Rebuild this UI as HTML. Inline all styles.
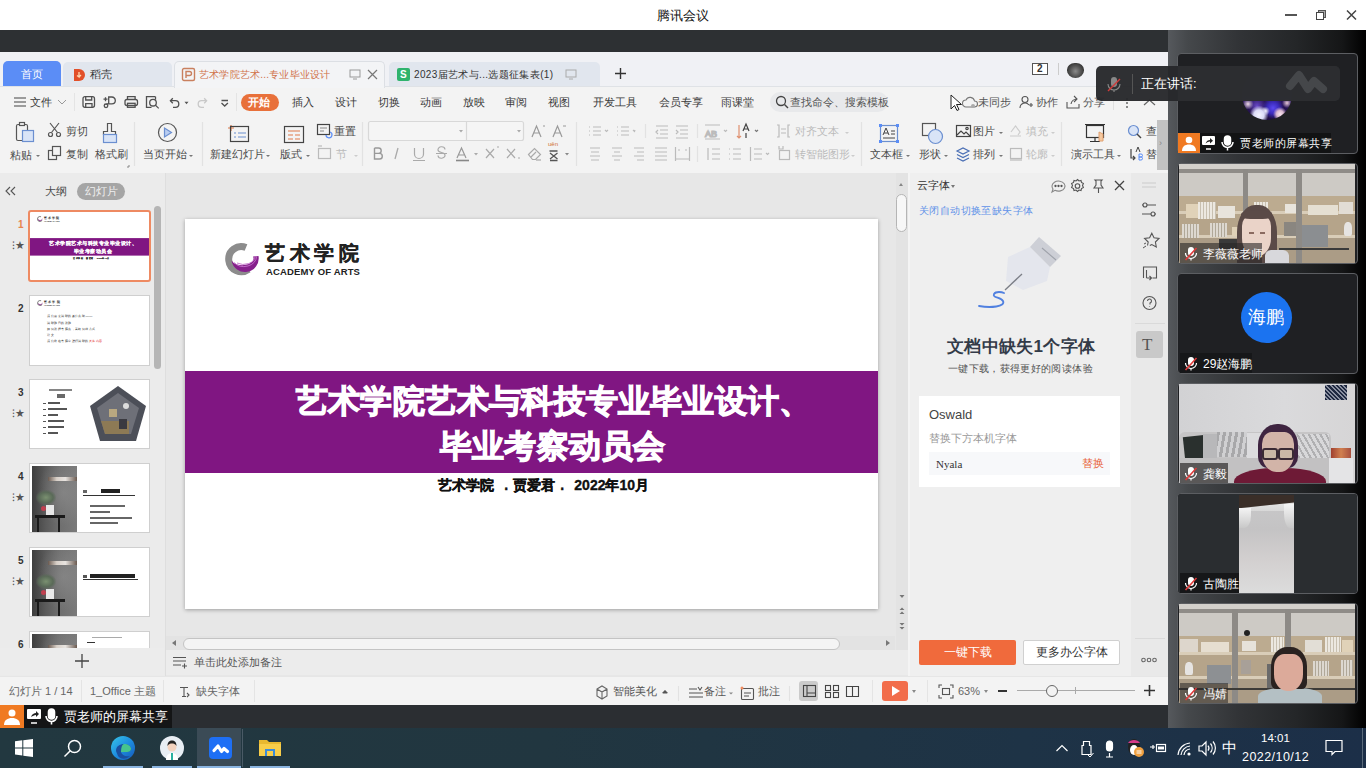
<!DOCTYPE html>
<html><head><meta charset="utf-8">
<style>
*{box-sizing:border-box;margin:0;padding:0}
html,body{width:1366px;height:768px;overflow:hidden;background:#fff;font-family:"Liberation Sans",sans-serif;color:#333}
.a{position:absolute}
.t{position:absolute;white-space:nowrap;line-height:1}
</style></head><body>
<!-- title bar -->
<div class="a" style="left:0;top:0;width:1366px;height:30px;background:#fff"></div>
<div class="t" style="left:657px;top:8.5px;font-size:13.2px;color:#111">腾讯会议</div>
<!-- dark band -->
<div class="a" style="left:0;top:30px;width:1168px;height:22px;background:#2d3033"></div>
<!-- WPS tab bar -->
<div class="a" style="left:0;top:52px;width:1168px;height:36px;background:#f0f1f5"></div>
<!-- menu + ribbon -->
<div class="a" style="left:0;top:86px;width:1168px;height:87px;background:#f3f3f3"></div>

<!-- window controls -->
<div class="a" style="left:1285px;top:14px;width:12px;height:2px;background:#555"></div>
<div class="a" style="left:1318px;top:10px;width:8px;height:8px;border:1.3px solid #555;background:#aaa"></div>
<div class="a" style="left:1316px;top:12px;width:8px;height:8px;border:1.3px solid #444;background:#fff"></div>
<svg class="a" style="left:1346px;top:9px" width="11" height="12"><path d="M1 1.5L10 10.5M10 1.5L1 10.5" stroke="#444" stroke-width="1.5"/></svg>
<!-- tabs -->
<div class="a" style="left:3px;top:61px;width:58px;height:25px;background:#5b8df6;border-radius:5px 5px 0 0"></div>
<div class="t" style="left:21px;top:69px;font-size:10.5px;color:#fff">首页</div>
<div class="a" style="left:63px;top:62px;width:109px;height:24px;background:#e1e6ee;border-radius:5px 5px 0 0"></div>
<svg class="a" style="left:73px;top:68px" width="13" height="14"><path d="M1 1h5a6 6 0 0 1 0 12H1z" fill="#e2502a"/><path d="M6 4v5l-2-1.5M6 9l2-2" stroke="#ffd8b0" stroke-width="1.3" fill="none"/></svg>
<div class="t" style="left:90px;top:69px;font-size:10.5px;color:#333">稻壳</div>
<div class="a" style="left:174px;top:61px;width:211px;height:27px;background:#f3f4f6;border:1px solid #dcdfe4;border-bottom:none;border-radius:5px 5px 0 0"></div>
<svg class="a" style="left:181px;top:67px" width="15" height="15" fill="none" stroke="#c9805f" stroke-width="1.4"><rect x="1.5" y="1.5" width="12" height="12" rx="1.5"/><path d="M5 11V4.5h3.5a2 2 0 0 1 0 4H5"/></svg>
<div class="t" style="left:199px;top:69.5px;font-size:10px;color:#d0724a;letter-spacing:0.2px">艺术学院艺术...专业毕业设计</div>
<svg class="a" style="left:349px;top:69px" width="12" height="11"><rect x="1" y="1" width="10" height="7" fill="none" stroke="#999"/><path d="M4 10h4" stroke="#999"/></svg>
<svg class="a" style="left:367px;top:69px" width="11" height="11"><path d="M1 1L10 10M10 1L1 10" stroke="#777" stroke-width="1.2"/></svg>
<div class="a" style="left:389px;top:62px;width:211px;height:24px;background:#e1e6ee;border-radius:5px 5px 0 0"></div>
<div class="a" style="left:397px;top:68px;width:13px;height:13px;background:#2fb36d;border-radius:2px"></div>
<div class="t" style="left:400px;top:69.5px;font-size:10px;color:#fff;font-weight:bold">S</div>
<div class="t" style="left:414px;top:69.5px;font-size:10px;color:#333;letter-spacing:0.35px">2023届艺术与...选题征集表(1)</div>
<svg class="a" style="left:565px;top:69px" width="12" height="11"><rect x="1" y="1" width="10" height="7" fill="none" stroke="#aaa"/><path d="M4 10h4" stroke="#aaa"/></svg>
<svg class="a" style="left:614px;top:67px" width="13" height="13"><path d="M6.5 1v11M1 6.5h11" stroke="#333" stroke-width="1.4"/></svg>
<div class="a" style="left:0;top:86px;width:1168px;height:1px;background:#dfe2e6"></div>
<div class="a" style="left:175px;top:86px;width:209px;height:2px;background:#f3f4f6"></div>
<!-- tab bar right -->
<div class="a" style="left:1032px;top:63px;width:16px;height:12px;border:1px solid #555;background:#fff"></div>
<div class="t" style="left:1037px;top:64px;font-size:10px;color:#333;font-weight:bold">2</div>
<div class="a" style="left:1058px;top:63px;width:1px;height:12px;background:#ccc"></div>
<div class="a" style="left:1067px;top:63px;width:17px;height:15px;border-radius:45% 45% 50% 50%;background:radial-gradient(circle at 50% 55%,#8a8a8a 0,#555 45%,#2e2e2e 80%)"></div>
<!-- menu row -->
<svg class="a" style="left:13px;top:96px" width="14" height="12"><path d="M1 2h12M1 6h12M1 10h12" stroke="#444" stroke-width="1.2"/></svg>
<div class="t" style="left:30px;top:97px;font-size:10.5px;color:#3a3a3a">文件</div>
<svg class="a" style="left:57px;top:99px" width="10" height="7"><path d="M1 1l4 4 4-4" stroke="#999" fill="none"/></svg>
<div class="a" style="left:74px;top:93px;width:1px;height:18px;background:#e4e4e4"></div>
<svg class="a" style="left:80px;top:94px" width="160" height="18" fill="none" stroke="#505050" stroke-width="1.3">
<rect x="3" y="2.7" width="11.5" height="10.6" rx="2"/><path d="M5.7 3v3h6V3M5.7 13.3V9.7h6.3v3.6"/>
<path d="M23.5 5.2h4M25.5 3.2v4"/><path d="M28.7 10V3h3.2a3.4 3.4 0 0 1 0 6.8H26.5"/><circle cx="26" cy="11.8" r="1.8"/>
<path d="M47.5 5.5V2.7h7.6v2.8"/><rect x="45" y="5.5" width="12.5" height="6" rx="2"/><rect x="47.5" y="9.3" width="7.6" height="4"/>
<path d="M75.5 2.7H66.5v10.6h5"/><path d="M75.5 2.7v3"/><circle cx="73" cy="8.7" r="3.3"/><path d="M75.4 11.1l3.3 3.3"/>
<path d="M90.5 6.7h5a3.3 3.3 0 0 1 0 6.6h-2.5"/><path d="M92.8 4.2l-2.4 2.5 2.4 2.5"/>
<path d="M104.5 7.8h4l-2 2.4z" fill="#555" stroke="none"/>
<path d="M126.5 6.7h-5a3.3 3.3 0 0 0 0 6.6h2.5M124.2 4.2l2.4 2.5-2.4 2.5" stroke="#c8c8c8"/>
<path d="M141.5 6.5h6.5M141.5 9l3.2 3 3.2-3" stroke="#505050"/>
</svg>
<div class="a" style="left:236px;top:93px;width:1px;height:18px;background:#e4e4e4"></div>
<div class="a" style="left:241px;top:94px;width:38px;height:17px;background:#e8703a;border-radius:9px"></div>
<div class="t" style="left:248px;top:97px;font-size:11px;color:#fff;font-weight:bold">开始</div>
<div class="t" style="left:292px;top:97px;font-size:10.5px;color:#3a3a3a">插入</div>
<div class="t" style="left:335px;top:97px;font-size:10.5px;color:#3a3a3a">设计</div>
<div class="t" style="left:378px;top:97px;font-size:10.5px;color:#3a3a3a">切换</div>
<div class="t" style="left:420px;top:97px;font-size:10.5px;color:#3a3a3a">动画</div>
<div class="t" style="left:463px;top:97px;font-size:10.5px;color:#3a3a3a">放映</div>
<div class="t" style="left:505px;top:97px;font-size:10.5px;color:#3a3a3a">审阅</div>
<div class="t" style="left:548px;top:97px;font-size:10.5px;color:#3a3a3a">视图</div>
<div class="t" style="left:593px;top:97px;font-size:10.5px;color:#3a3a3a">开发工具</div>
<div class="t" style="left:659px;top:97px;font-size:10.5px;color:#3a3a3a">会员专享</div>
<div class="t" style="left:721px;top:97px;font-size:10.5px;color:#3a3a3a">雨课堂</div>
<div class="a" style="left:770px;top:92px;width:118px;height:20px;background:#e8e9eb;border-radius:10px"></div>
<svg class="a" style="left:775px;top:95px" width="14" height="14"><circle cx="6" cy="6" r="4.5" fill="none" stroke="#444" stroke-width="1.3"/><path d="M9.5 9.5l3.5 3.5" stroke="#444" stroke-width="1.4"/></svg>
<div class="t" style="left:790px;top:97px;font-size:10.5px;color:#555">查找命令、搜索模板</div>
<svg class="a" style="left:950px;top:94px" width="12" height="18"><path d="M1 1v14l3.5-3.5 2.5 5 2-1-2.5-5h5z" fill="#fff" stroke="#222" stroke-width="1"/></svg>
<svg class="a" style="left:962px;top:95px" width="16" height="14" fill="none" stroke="#777" stroke-width="1.1"><path d="M4 12a3.5 3.5 0 0 1 0-7 4.5 4.5 0 0 1 8.5 1 3 3 0 0 1 0 6z"/><circle cx="11" cy="11" r="2" fill="#aaa" stroke="none"/></svg>
<div class="t" style="left:978px;top:97px;font-size:11px;color:#555">未同步</div>
<svg class="a" style="left:1019px;top:95px" width="14" height="14" fill="none" stroke="#555" stroke-width="1.1"><circle cx="6" cy="4.5" r="3"/><path d="M1 13a5 5 0 0 1 9-3M10 10h4M12 8v4"/></svg>
<div class="t" style="left:1036px;top:97px;font-size:11px;color:#555">协作</div>
<svg class="a" style="left:1066px;top:95px" width="14" height="14" fill="none" stroke="#555" stroke-width="1.1"><path d="M1 7v6h12V9M5 9a6 6 0 0 1 6-5M8 1l3 3-3 3"/></svg>
<div class="t" style="left:1083px;top:97px;font-size:11px;color:#555">分享</div>


<div class="a" style="left:1113px;top:94px;width:1px;height:16px;background:#e0e0e0"></div>
<svg class="a" style="left:1124px;top:96px" width="34" height="14" fill="#666"><circle cx="3" cy="3" r="1"/><circle cx="3" cy="7" r="1"/><circle cx="3" cy="11" r="1"/><path d="M20 9l5.5-5 5.5 5" fill="none" stroke="#666" stroke-width="1.2"/></svg>
<!-- ribbon -->
<svg class="a" style="left:0;top:116px" width="1168" height="56" fill="none" stroke-width="1.2">
<!-- paste -->
<rect x="16.5" y="8.5" width="11" height="16" rx="1.5" stroke="#555"/><rect x="19.5" y="6.5" width="5" height="3" stroke="#555" fill="#f3f3f3"/><rect x="22.5" y="14.5" width="11" height="11" fill="#d9e4f7" stroke="#6b8fd0"/>
<!-- scissors -->
<circle cx="50.5" cy="18.5" r="2" stroke="#555"/><circle cx="58.5" cy="18.5" r="2" stroke="#555"/><path d="M51.5 16.5L59 7M57.5 16.5L50 7" stroke="#555"/>
<!-- copy -->
<rect x="48.5" y="34.5" width="8" height="9" stroke="#555"/><rect x="52.5" y="30.5" width="8" height="9" stroke="#555" fill="#f3f3f3"/>
<!-- format brush -->
<path d="M107.5 7.5h4v8h4v3h-12v-3h4z" stroke="#555"/><rect x="103.5" y="18.5" width="13" height="8" fill="#d9e4f7" stroke="#6b8fd0"/>
<path d="M127 51h2v-2" stroke="#888" stroke-width="1"/>
<path d="M134.5 6v44" stroke="#e2e2e2"/>
<!-- play circle -->
<circle cx="167.5" cy="16.5" r="9" stroke="#555"/><path d="M164.5 12v9l7-4.5z" fill="#b9cdf0" stroke="#6b8fd0"/>
<path d="M202.5 6v44" stroke="#e2e2e2"/>
<!-- new slide -->
<path d="M231 9v6M228 12h6" stroke="#e07a4a"/><rect x="230.5" y="10.5" width="18" height="15" stroke="#444"/><path d="M234 17h2M238 17h8M234 21h2M238 21h8" stroke="#6b8fd0"/>
<!-- layout -->
<rect x="284.5" y="10.5" width="19" height="16" stroke="#444"/><path d="M288 15h12M288 19h5M295 19h5M288 23h5M295 23h5" stroke="#e07a4a"/>
<!-- reset -->
<rect x="317.5" y="8.5" width="12" height="10" stroke="#444"/><path d="M320 12h7M320 15h4" stroke="#888"/><path d="M326 19a3 3 0 1 0 4-3" stroke="#5b8df6"/>
<!-- section -->
<rect x="318.5" y="32.5" width="12" height="10" stroke="#bbb"/><path d="M318 30h4" stroke="#bbb"/>
<path d="M362.5 6v44" stroke="#e2e2e2"/>
<!-- font boxes -->
<rect x="368.5" y="5.5" width="155" height="19" rx="2" stroke="#d8d8d8" fill="#f5f5f5"/><path d="M466.5 6v18" stroke="#d8d8d8"/>
<path d="M459 14h4l-2 2.5zM517 14h4l-2 2.5z" fill="#aaa" stroke="none"/>
<path d="M532 21l4.5-11 4.5 11M534 17h5M543 10h2" stroke="#999"/><path d="M553 21l4.5-11 4.5 11M555 17h5M563 10h3" stroke="#999"/>
<!-- B I U S -->
<path d="M374.5 32v11h5a2.8 2.8 0 0 0 0-5.6h-5M374.5 37.4h4a2.7 2.7 0 0 0 0-5.4h-4" stroke="#999" stroke-width="1.4"/>
<path d="M398 32l-3 11" stroke="#aaa" stroke-width="1.3"/>
<path d="M414.5 32v6a4.5 4.5 0 0 0 9 0v-6M413 44.5h12" stroke="#aaa" stroke-width="1.2"/>
<path d="M445 33.5a3.5 3 0 0 0-7 .5c0 3 7 2 7 5a3.5 3 0 0 1-7 .5M436 37.5h11" stroke="#aaa" stroke-width="1.2"/>
<path d="M457 42l4.5-10 4.5 10M459 39h5" stroke="#999"/><path d="M456 44.5h13" stroke="#888" stroke-width="1.6"/><path d="M474 37h4l-2 2.5z" fill="#aaa" stroke="none"/>
<path d="M486 33l8 9M494 33l-8 9M497 31h2" stroke="#aaa"/><path d="M507 33l8 9M515 33l-8 9M518 42h2" stroke="#aaa"/>
<path d="M528.5 38.5l6-6 6 6-5 5h-3zM531 41l5-5" stroke="#aaa"/><path d="M536 44h5" stroke="#aaa"/>
<text x="548" y="30" font-size="6" fill="#d07030" font-family="Liberation Sans">uěn</text><path d="M549.5 35h8M550 37l7.5 6M557.5 37l-7.5 6M550 44.5h7.5" stroke="#555" stroke-width="1.3"/><path d="M565 37h4l-2 2.5z" fill="#888" stroke="none"/>
<path d="M576.5 6v44" stroke="#e2e2e2"/>
<!-- paragraph -->
<g stroke="#bbb"><path d="M589 11h1M593 11h8M589 15h1M593 15h8M589 19h1M593 19h8M605 14l1.5 1.5L608 14"/>
<path d="M617 11h1M621 11h8M617 15h1M621 15h8M617 19h1M621 19h8M633 14l1.5 1.5L635 14"/>
<path d="M645.5 8v14" stroke="#e2e2e2"/>
<path d="M656 10h12M660 14h8M660 18h8M656 22h12M658 14l-2 2 2 2"/><path d="M676 10h12M680 14h8M680 18h8M676 22h12M676 14l2 2-2 2"/>
<path d="M697.5 8v14" stroke="#e2e2e2"/>
<path d="M705 9h15M705 23h15"/><text x="705" y="21" font-size="9" fill="#aaa" font-family="Liberation Sans">AB</text><path d="M724 14l1.5 1.5L727 14"/>
</g>
<path d="M739 9v13M737 20l2 2 2-2" stroke="#e09070"/><path d="M743 15l3-7 3 7M744 13h4M746 17v5" stroke="#444"/><path d="M755 14l1.5 1.5L758 14" stroke="#777"/>
<g stroke="#bbb">
<path d="M590 32h10M591 36h8M590 40h10M591 44h8M612 32h10M614 36h6M612 40h10M614 44h6M634 32h10M637 36h7M634 40h10M637 44h7M655 32h12M655 36h12M655 40h12M655 44h12"/>
<path d="M675.5 31v14M689.5 31v14M676 43h13M678 34h2M685 34h2"/>
<path d="M697.5 30v16" stroke="#e2e2e2"/>
<path d="M708 32v12M712 33h8M712 38h8M712 43h8M729 33h1M733 33h8M729 38h1M733 38h8M729 43h1M733 43h8M750.5 31v14M754 33h8M754 38h8M754 43h8M766 37l1.5 1.5L769 37"/>
<path d="M777 9h2v12h-2M790 9h-2v12h2M781 13h5M781 17h5"/>
<rect x="779.5" y="34.5" width="10" height="9"/><path d="M779 30v3h4v-3"/>
</g>
<path d="M861.5 6v44" stroke="#e2e2e2"/>
<!-- textbox -->
<rect x="880.5" y="9.5" width="17" height="16" stroke="#6b8fd0"/><path d="M883 19l3-7 3 7M884 17h4M891 15h4M891 18h4M883 22h12" stroke="#444" stroke-width="1"/>
<rect x="879" y="8" width="3" height="3" fill="#5b8df6"/><rect x="896" y="8" width="3" height="3" fill="#5b8df6"/><rect x="879" y="24" width="3" height="3" fill="#5b8df6"/><rect x="896" y="24" width="3" height="3" fill="#5b8df6"/>
<!-- shapes -->
<rect x="922.5" y="7.5" width="13" height="12" stroke="#555"/><circle cx="935.5" cy="20.5" r="7" fill="#d9e4f7" stroke="#6b8fd0"/>
<!-- picture -->
<rect x="956.5" y="9.5" width="14" height="11" stroke="#444"/><path d="M957 19l4-4 3 3 2-2 4 4" stroke="#444"/><circle cx="967" cy="12.5" r="1.2" stroke="#444"/>
<path d="M957 35l6-3 6 3-6 3zM957 38.5l6 3 6-3M957 42l6 3 6-3" stroke="#4a6fb5"/>
<path d="M1010 20h11M1011 16l4.5-6 4.5 6-2 3" stroke="#ccc"/><rect x="1010.5" y="32.5" width="11" height="10" stroke="#bbb"/><path d="M1010 44h12" stroke="#bbb"/>
<path d="M1061.5 6v44" stroke="#e2e2e2"/>
<!-- presenter tools -->
<rect x="1086.5" y="9.5" width="17" height="12" stroke="#333"/><path d="M1085 8.5h20M1095 22v3M1090 25.5h10" stroke="#333"/><path d="M1099 16v9h4v-7z" fill="#f5c9a0" stroke="#e0a070" stroke-width="1"/>
<!-- find replace -->
<circle cx="1133.5" cy="14.5" r="5" fill="#d9e4f7" stroke="#6b8fd0"/><path d="M1137 18l4 4" stroke="#444" stroke-width="1.4"/>
<path d="M1131 33v9h4M1133 40l2 2-2 2" stroke="#444"/><path d="M1136 36l2-5 2 5" stroke="#444" stroke-width="1"/><path d="M1139 38v6h2a1.5 1.5 0 0 0 0-3h-2 2a1.5 1.5 0 0 0 0-3h-2" stroke="#5b8df6" stroke-width="1"/>
</svg>
<div class="a" style="left:1157px;top:120px;width:11px;height:50px;background:#c2c2c2"></div>
<div class="t" style="left:1159px;top:139px;font-size:9px;color:#888">›</div>
<div class="t" style="left:10px;top:150px;font-size:10.5px;color:#4a4a4a">粘贴</div>
<div class="t" style="left:66px;top:126px;font-size:10.5px;color:#4a4a4a">剪切</div>
<div class="t" style="left:66px;top:149px;font-size:10.5px;color:#4a4a4a">复制</div>
<div class="t" style="left:95px;top:149px;font-size:10.5px;color:#4a4a4a">格式刷</div>
<div class="t" style="left:143px;top:149px;font-size:10.5px;color:#4a4a4a">当页开始</div>
<div class="t" style="left:210px;top:149px;font-size:10.5px;color:#4a4a4a">新建幻灯片</div>
<div class="t" style="left:280px;top:149px;font-size:10.5px;color:#4a4a4a">版式</div>
<div class="t" style="left:334px;top:126px;font-size:10.5px;color:#4a4a4a">重置</div>
<div class="t" style="left:336px;top:149px;font-size:10.5px;color:#bbb">节</div>
<div class="t" style="left:795px;top:126px;font-size:10.5px;color:#bbb">对齐文本</div>
<div class="t" style="left:795px;top:149px;font-size:10.5px;color:#bbb">转智能图形</div>
<div class="t" style="left:870px;top:149px;font-size:10.5px;color:#4a4a4a">文本框</div>
<div class="t" style="left:919px;top:149px;font-size:10.5px;color:#4a4a4a">形状</div>
<div class="t" style="left:973px;top:126px;font-size:10.5px;color:#4a4a4a">图片</div>
<div class="t" style="left:973px;top:149px;font-size:10.5px;color:#4a4a4a">排列</div>
<div class="t" style="left:1026px;top:126px;font-size:10.5px;color:#bbb">填充</div>
<div class="t" style="left:1026px;top:149px;font-size:10.5px;color:#bbb">轮廓</div>
<div class="t" style="left:1071px;top:149px;font-size:10.5px;color:#4a4a4a">演示工具</div>
<div class="t" style="left:1146px;top:126px;font-size:10.5px;color:#4a4a4a">查</div>
<div class="t" style="left:1146px;top:149px;font-size:10.5px;color:#4a4a4a">替</div>
<div class="a" style="left:36px;top:155px;width:0;height:0;border-left:2px solid transparent;border-right:2px solid transparent;border-top:2px solid #777"></div>
<div class="a" style="left:189px;top:155px;width:0;height:0;border-left:2px solid transparent;border-right:2px solid transparent;border-top:2px solid #777"></div>
<div class="a" style="left:266px;top:155px;width:0;height:0;border-left:2px solid transparent;border-right:2px solid transparent;border-top:2px solid #777"></div>
<div class="a" style="left:306px;top:155px;width:0;height:0;border-left:2px solid transparent;border-right:2px solid transparent;border-top:2px solid #777"></div>
<div class="a" style="left:354px;top:155px;width:0;height:0;border-left:2px solid transparent;border-right:2px solid transparent;border-top:2px solid #ccc"></div>
<div class="a" style="left:845px;top:132px;width:0;height:0;border-left:2px solid transparent;border-right:2px solid transparent;border-top:2px solid #ccc"></div>
<div class="a" style="left:851px;top:155px;width:0;height:0;border-left:2px solid transparent;border-right:2px solid transparent;border-top:2px solid #ccc"></div>
<div class="a" style="left:906px;top:155px;width:0;height:0;border-left:2px solid transparent;border-right:2px solid transparent;border-top:2px solid #777"></div>
<div class="a" style="left:944px;top:155px;width:0;height:0;border-left:2px solid transparent;border-right:2px solid transparent;border-top:2px solid #777"></div>
<div class="a" style="left:999px;top:132px;width:0;height:0;border-left:2px solid transparent;border-right:2px solid transparent;border-top:2px solid #777"></div>
<div class="a" style="left:999px;top:155px;width:0;height:0;border-left:2px solid transparent;border-right:2px solid transparent;border-top:2px solid #777"></div>
<div class="a" style="left:1051px;top:132px;width:0;height:0;border-left:2px solid transparent;border-right:2px solid transparent;border-top:2px solid #ccc"></div>
<div class="a" style="left:1051px;top:155px;width:0;height:0;border-left:2px solid transparent;border-right:2px solid transparent;border-top:2px solid #ccc"></div>
<div class="a" style="left:1117px;top:155px;width:0;height:0;border-left:2px solid transparent;border-right:2px solid transparent;border-top:2px solid #777"></div>

<!-- left panel -->
<div class="a" style="left:0;top:173px;width:166px;height:503px;background:#ebebeb"></div>

<div class="a" style="left:165px;top:173px;width:1px;height:503px;background:#dedede"></div>
<svg class="a" style="left:5px;top:186px" width="11" height="10" fill="none" stroke="#555" stroke-width="1.1"><path d="M5 1L1 5l4 4M10 1L6 5l4 4"/></svg>
<div class="t" style="left:45px;top:186px;font-size:10.5px;color:#4a4a4a">大纲</div>
<div class="a" style="left:77px;top:183px;width:48px;height:17px;background:#a5a5a5;border-radius:9px"></div>
<div class="t" style="left:85px;top:186px;font-size:11px;color:#f0f0f0">幻灯片</div>
<!-- scrollbar -->
<div class="a" style="left:154px;top:206px;width:7px;height:163px;background:#b5b5b5;border-radius:4px"></div>
<!-- numbers -->
<div class="t" style="left:18px;top:220px;font-size:10px;color:#e8844f;font-weight:bold">1</div>
<div class="t" style="left:18px;top:304px;font-size:10px;color:#333;font-weight:bold">2</div>
<div class="t" style="left:18px;top:388px;font-size:10px;color:#333;font-weight:bold">3</div>
<div class="t" style="left:18px;top:472px;font-size:10px;color:#333;font-weight:bold">4</div>
<div class="t" style="left:18px;top:556px;font-size:10px;color:#333;font-weight:bold">5</div>
<div class="t" style="left:18px;top:640px;font-size:10px;color:#333;font-weight:bold">6</div>
<div class="t" style="left:12px;top:240px;font-size:11px;color:#555">⁝★</div>
<div class="t" style="left:12px;top:408px;font-size:11px;color:#555">⁝★</div>
<div class="t" style="left:12px;top:492px;font-size:11px;color:#555">⁝★</div>
<div class="t" style="left:12px;top:576px;font-size:11px;color:#555">⁝★</div>

<div class="a" style="left:28px;top:210px;width:123px;height:72px;border:2px solid #ee8a62;border-radius:3px;background:#fff;overflow:hidden">
 <div class="a" style="left:0;top:0;width:693px;height:391px;transform:scale(0.1717);transform-origin:0 0">
  <svg class="a" style="left:37px;top:22px" width="40" height="36">
   <path d="M27 5.5A14 14 0 1 0 33 26" fill="none" stroke="#8a8a8a" stroke-width="6"/>
   <path d="M10 22c6 8 18 8 25-2" fill="none" stroke="#8c2a8c" stroke-width="5"/>
  </svg>
  <div class="t" style="left:80px;top:24px;font-size:20px;color:#222;letter-spacing:4.5px;font-weight:700">艺术学院</div>
  <div class="t" style="left:81px;top:48px;font-size:9.5px;color:#222;font-weight:bold">ACADEMY OF ARTS</div>
  <div class="a" style="left:0;top:152px;width:693px;height:102px;background:#801682"></div>
  <div class="t" style="left:111px;top:167px;font-size:31.5px;color:#fff;font-weight:900;letter-spacing:0.2px;-webkit-text-stroke:1.1px #fff">艺术学院艺术与科技专业毕业设计、</div>
  <div class="t" style="left:255px;top:212px;font-size:31.5px;color:#fff;font-weight:900;letter-spacing:0.2px;-webkit-text-stroke:1.1px #fff">毕业考察动员会</div>
  <div class="t" style="left:253px;top:259px;font-size:14px;color:#111;font-weight:900;word-spacing:1.2px;-webkit-text-stroke:0.35px #111">艺术学院 &nbsp;.&nbsp;贾爱君&nbsp;.&nbsp;&nbsp;2022年10月</div>
 </div>
</div>
<!-- thumb 2 -->
<div class="a" style="left:29px;top:295px;width:121px;height:71px;border:1px solid #cfcfcf;background:#fff;overflow:hidden">
 <div class="a" style="left:0;top:0;width:693px;height:391px;transform:scale(0.1732);transform-origin:0 0">
  <svg class="a" style="left:37px;top:22px" width="40" height="36">
   <path d="M27 5.5A14 14 0 1 0 33 26" fill="none" stroke="#8a8a8a" stroke-width="6"/>
   <path d="M10 22c6 8 18 8 25-2" fill="none" stroke="#8c2a8c" stroke-width="5"/>
  </svg>
  <div class="t" style="left:80px;top:24px;font-size:20px;color:#222;letter-spacing:4.5px;font-weight:700">艺术学院</div>
  <div class="t" style="left:81px;top:48px;font-size:9.5px;color:#222;font-weight:bold">ACADEMY OF ARTS</div>
  <div class="t" style="left:100px;top:100px;font-size:20px;color:#222;line-height:35px;white-space:pre">我们需要调研的是什么呢——
调研题目的选题
如何选择考察点，采取何种方式
论文
我们将在考察中进行调研的<span style="color:#e02020">具体内容</span></div>
 </div>
</div>
<!-- thumb 3 -->
<div class="a" style="left:29px;top:379px;width:121px;height:70px;border:1px solid #cfcfcf;background:#fff;overflow:hidden">
 <div class="a" style="left:19px;top:9px;width:23px;height:2px;background:#666;opacity:.8"></div>
 <div class="a" style="left:27px;top:14px;width:8px;height:4px;background:#444;opacity:.8"></div>
 <div class="a" style="left:13px;top:23px;width:3px;height:1px;background:#555"></div><div class="a" style="left:18px;top:22px;width:12px;height:1.5px;background:#555"></div>
 <div class="a" style="left:13px;top:29px;width:3px;height:1px;background:#555"></div><div class="a" style="left:18px;top:28px;width:19px;height:1.5px;background:#555"></div>
 <div class="a" style="left:13px;top:35px;width:3px;height:1px;background:#555"></div><div class="a" style="left:18px;top:34px;width:10px;height:1.5px;background:#555"></div>
 <div class="a" style="left:13px;top:41px;width:3px;height:1px;background:#555"></div><div class="a" style="left:18px;top:40px;width:16px;height:1.5px;background:#555"></div>
 <div class="a" style="left:13px;top:47px;width:3px;height:1px;background:#555"></div><div class="a" style="left:18px;top:46px;width:16px;height:1.5px;background:#555"></div>
 <div class="a" style="left:13px;top:53px;width:3px;height:1px;background:#555"></div><div class="a" style="left:18px;top:52px;width:10px;height:1.5px;background:#555"></div>
 <svg class="a" style="left:59px;top:5px" width="58" height="57"><path d="M29 1L57 21 47 56H11L1 21z" fill="#4c4f58"/><path d="M29 8L50 23 42 49H16L8 23z" fill="#6e7078"/><path d="M12 36h28v13H16z" fill="#8d7a55"/><rect x="20" y="24" width="8" height="8" fill="#b9a880"/><circle cx="37" cy="21" r="3" fill="#ddd"/><rect x="30" y="34" width="8" height="10" fill="#3a3a40"/></svg>
</div>
<div class="a" style="left:29px;top:463px;width:121px;height:70px;border:1px solid #cfcfcf;background:#fff;overflow:hidden">
 <div class="a" style="left:2px;top:2px;width:45px;height:66px;overflow:hidden;background:linear-gradient(90deg,#3e3e3e 0,#5a5a5a 30%,#6e6e6e 60%,#7a7a7a 100%)">
  <div class="a" style="left:0;top:0;width:45px;height:66px;background:radial-gradient(ellipse at 70% 40%,rgba(150,150,150,.5),transparent 60%)"></div>
  <div class="a" style="left:16px;top:11px;width:29px;height:4px;background:linear-gradient(90deg,#6a5a50,#d8d0c8 30%,#e8e4e0 60%,#6a5a50)"></div>
  <div class="a" style="left:4px;top:24px;width:20px;height:15px;background:radial-gradient(ellipse,#7a9070 0,#5a6a58 50%,transparent 75%)"></div>
  <div class="a" style="left:14px;top:39px;width:8px;height:10px;background:#e8e8e8"></div>
  <div class="a" style="left:9px;top:40px;width:5px;height:5px;background:#c04050;border-radius:50%"></div>
  <div class="a" style="left:3px;top:49px;width:30px;height:3px;background:#1a1a1a"></div>
  <div class="a" style="left:5px;top:52px;width:2px;height:14px;background:#1a1a1a"></div>
  <div class="a" style="left:26px;top:52px;width:2px;height:14px;background:#1a1a1a"></div>
 </div>

 <div class="a" style="left:53px;top:26px;width:4px;height:3px;background:#666"></div>
 <div class="a" style="left:71px;top:25px;width:19px;height:4px;background:#222"></div>
 <div class="a" style="left:53px;top:31px;width:52px;height:1px;background:#333"></div>
 <div class="a" style="left:60px;top:41px;width:35px;height:1.5px;background:#666"></div>
 <div class="a" style="left:60px;top:47px;width:20px;height:1.5px;background:#666"></div>
 <div class="a" style="left:60px;top:53px;width:42px;height:1.5px;background:#666"></div>
 <div class="a" style="left:60px;top:58px;width:28px;height:1.5px;background:#666"></div>
</div>
<div class="a" style="left:29px;top:547px;width:121px;height:70px;border:1px solid #cfcfcf;background:#fff;overflow:hidden">
 <div class="a" style="left:2px;top:2px;width:45px;height:66px;overflow:hidden;background:linear-gradient(90deg,#3e3e3e 0,#5a5a5a 30%,#6e6e6e 60%,#7a7a7a 100%)">
  <div class="a" style="left:0;top:0;width:45px;height:66px;background:radial-gradient(ellipse at 70% 40%,rgba(150,150,150,.5),transparent 60%)"></div>
  <div class="a" style="left:16px;top:11px;width:29px;height:4px;background:linear-gradient(90deg,#6a5a50,#d8d0c8 30%,#e8e4e0 60%,#6a5a50)"></div>
  <div class="a" style="left:4px;top:24px;width:20px;height:15px;background:radial-gradient(ellipse,#7a9070 0,#5a6a58 50%,transparent 75%)"></div>
  <div class="a" style="left:14px;top:39px;width:8px;height:10px;background:#e8e8e8"></div>
  <div class="a" style="left:9px;top:40px;width:5px;height:5px;background:#c04050;border-radius:50%"></div>
  <div class="a" style="left:3px;top:49px;width:30px;height:3px;background:#1a1a1a"></div>
  <div class="a" style="left:5px;top:52px;width:2px;height:14px;background:#1a1a1a"></div>
  <div class="a" style="left:26px;top:52px;width:2px;height:14px;background:#1a1a1a"></div>
 </div>

 <div class="a" style="left:53px;top:27px;width:4px;height:3px;background:#555"></div>
 <div class="a" style="left:60px;top:26px;width:45px;height:4px;background:#222"></div>
 <div class="a" style="left:53px;top:31px;width:55px;height:1px;background:#333"></div>
</div>
<div class="a" style="left:29px;top:631px;width:121px;height:17px;border:1px solid #cfcfcf;border-bottom:none;background:#fff;overflow:hidden">
 <div class="a" style="left:2px;top:2px;width:45px;height:66px;overflow:hidden;background:linear-gradient(90deg,#3e3e3e 0,#5a5a5a 30%,#6e6e6e 60%,#7a7a7a 100%)">
  <div class="a" style="left:0;top:0;width:45px;height:66px;background:radial-gradient(ellipse at 70% 40%,rgba(150,150,150,.5),transparent 60%)"></div>
  <div class="a" style="left:16px;top:11px;width:29px;height:4px;background:linear-gradient(90deg,#6a5a50,#d8d0c8 30%,#e8e4e0 60%,#6a5a50)"></div>
  <div class="a" style="left:4px;top:24px;width:20px;height:15px;background:radial-gradient(ellipse,#7a9070 0,#5a6a58 50%,transparent 75%)"></div>
  <div class="a" style="left:14px;top:39px;width:8px;height:10px;background:#e8e8e8"></div>
  <div class="a" style="left:9px;top:40px;width:5px;height:5px;background:#c04050;border-radius:50%"></div>
  <div class="a" style="left:3px;top:49px;width:30px;height:3px;background:#1a1a1a"></div>
  <div class="a" style="left:5px;top:52px;width:2px;height:14px;background:#1a1a1a"></div>
  <div class="a" style="left:26px;top:52px;width:2px;height:14px;background:#1a1a1a"></div>
 </div>

 <div class="a" style="left:62px;top:5px;width:30px;height:1px;background:#aaa"></div>
 <div class="a" style="left:57px;top:10px;width:8px;height:1px;background:#333"></div>
</div>
<div class="a" style="left:0;top:648px;width:164px;height:27px;background:#ececec"></div>
<svg class="a" style="left:75px;top:654px" width="14" height="14"><path d="M7 0v14M0 7h14" stroke="#444" stroke-width="1.3"/></svg>

<!-- canvas -->
<div class="a" style="left:166px;top:173px;width:744px;height:503px;background:#e7e7e7"></div>
<!-- slide -->
<div class="a" style="left:185px;top:219px;width:693px;height:390px;background:#fff;box-shadow:0 1px 4px rgba(0,0,0,.32)"></div>
<div class="a" style="left:185px;top:371px;width:693px;height:102px;background:#801682"></div>
<svg class="a" style="left:222px;top:241px" width="40" height="36">
 <path d="M24 6.6A12.5 12.5 0 1 0 26.5 28.3" fill="none" stroke="#8c8c8c" stroke-width="7"/>
 <path d="M9.5 19.5A13.5 13.5 0 0 0 36.5 15L31 15.5A11 6.5 0 0 1 9.5 19.5z" fill="#86208c"/>
 <path d="M12 21.5A12.5 10 0 0 0 34.5 15.5M15 22A11.5 8 0 0 0 33 15.5" fill="none" stroke="#c470cc" stroke-width="0.9"/>
</svg>
<div class="t" style="left:265px;top:243px;font-size:20px;color:#222;letter-spacing:4.5px;font-weight:700;-webkit-text-stroke:0.3px #222">艺术学院</div>
<div class="t" style="left:266px;top:267px;font-size:9.5px;color:#222;font-weight:bold;letter-spacing:0.15px">ACADEMY OF ARTS</div>
<div class="t" style="left:296px;top:386px;font-size:31.5px;color:#fff;font-weight:900;letter-spacing:0.2px;-webkit-text-stroke:1.1px #fff">艺术学院艺术与科技专业毕业设计、</div>
<div class="t" style="left:440px;top:431px;font-size:31.5px;color:#fff;font-weight:900;letter-spacing:0.2px;-webkit-text-stroke:1.1px #fff">毕业考察动员会</div>
<div class="t" style="left:438px;top:478px;font-size:14px;color:#111;font-weight:900;word-spacing:1.2px;-webkit-text-stroke:0.35px #111">艺术学院 &nbsp;.&nbsp;贾爱君&nbsp;.&nbsp;&nbsp;2022年10月</div>
<!-- h scrollbar -->
<div class="a" style="left:166px;top:636px;width:729px;height:14px;background:#e3e3e3"></div>
<div class="a" style="left:183px;top:638px;width:657px;height:12px;background:#f4f4f4;border:1px solid #c4c4c4;border-radius:6px"></div>
<div class="a" style="left:172px;top:640px;width:0;height:0;border-top:3px solid transparent;border-bottom:3px solid transparent;border-right:4px solid #777"></div>
<div class="a" style="left:886px;top:640px;width:0;height:0;border-top:3px solid transparent;border-bottom:3px solid transparent;border-left:4px solid #777"></div>
<!-- v scrollbar -->
<div class="a" style="left:896px;top:173px;width:12px;height:477px;background:#e3e3e3"></div>
<div class="a" style="left:896px;top:194px;width:11px;height:38px;background:#f7f7f7;border:1px solid #b5b5b5;border-radius:6px"></div>
<div class="a" style="left:899px;top:183px;width:0;height:0;border-left:2.5px solid transparent;border-right:2.5px solid transparent;border-bottom:3px solid #888"></div>
<svg class="a" style="left:898px;top:593px" width="8" height="38" fill="#777"><path d="M1.5 2h5L4 5z"/><path d="M1.5 17l2.5-2.5 2.5 2.5zM1.5 21l2.5-2.5 2.5 2.5z"/><path d="M1.5 30h5L4 32.5zM1.5 34h5L4 36.5z"/></svg>
<!-- notes -->
<div class="a" style="left:166px;top:650px;width:744px;height:25px;background:#ececec"></div>
<svg class="a" style="left:172px;top:656px" width="16" height="13" fill="none" stroke="#555" stroke-width="1.1"><path d="M1 1.5h13M1 5h13M1 9h8M10 10h5M12.5 7.5v5"/></svg>
<div class="t" style="left:194px;top:657px;font-size:11px;color:#555">单击此处添加备注</div>
<!-- right pane -->
<div class="a" style="left:908px;top:173px;width:223px;height:503px;background:#efefef;border-left:2px solid #f4f4f4"></div>
<div class="a" style="left:1131px;top:173px;width:37px;height:503px;background:#e9e9e9"></div>
<div class="t" style="left:917px;top:180px;font-size:11px;color:#333">云字体</div>
<div class="a" style="left:951px;top:185px;width:0;height:0;border-left:2.5px solid transparent;border-right:2.5px solid transparent;border-top:3px solid #777"></div>
<svg class="a" style="left:1049px;top:178px" width="80" height="16" fill="none" stroke="#555" stroke-width="1.1">
 <path d="M3 8a6.5 5 0 1 1 3 4.3L3 14l1-3A5 5 0 0 1 3 8z" stroke="#888"/><circle cx="6.5" cy="8" r=".6" fill="#888"/><circle cx="9.5" cy="8" r=".6" fill="#888"/><circle cx="12.5" cy="8" r=".6" fill="#888"/>
 <circle cx="28.5" cy="8" r="2.3"/><path d="M28.5 1.5l1.5 1.5 2-.5.5 2 1.9 1-.9 2 .9 2-1.9 1-.5 2-2-.5-1.5 1.5-1.5-1.5-2 .5-.5-2-1.9-1 .9-2-.9-2 1.9-1 .5-2 2 .5z"/>
 <path d="M46 2h7l-1 1v4l2 3h-9l2-3V3zM49.5 10v5"/>
 <path d="M66 3l9 9M75 3l-9 9" stroke="#444" stroke-width="1.3"/>
</svg>
<div class="t" style="left:919px;top:205.5px;font-size:10px;color:#5f92e8;letter-spacing:0.4px">关闭自动切换至缺失字体</div>
<!-- pen illustration -->
<svg class="a" style="left:970px;top:230px" width="100" height="85">
 <path d="M60 17L38 27 36 51 53 60 77 51 80 37z" fill="#e4e6ed"/>
 <path d="M69 7L91 26 80 37 60 17z" fill="#cdcfd6"/>
 <path d="M72 18L86 30" stroke="#9fa2aa" stroke-width="1.1"/>
 <path d="M52 44L35 60" stroke="#7b7e86" stroke-width="1.3"/>
 <path d="M9 76C20 78 36 77 33 71 31 67 22 68 24 64 26 61 32 62 34 63" fill="none" stroke="#5080e0" stroke-width="1.8" stroke-linecap="round"/>
</svg>
<div class="t" style="left:947px;top:337.5px;font-size:17px;color:#333b48;font-weight:bold;letter-spacing:0.3px">文档中缺失1个字体</div>
<div class="t" style="left:948px;top:364px;font-size:10.4px;color:#555;letter-spacing:0.35px">一键下载，获得更好的阅读体验</div>
<div class="a" style="left:919px;top:396px;width:201px;height:91px;background:#fff"></div>
<div class="t" style="left:929px;top:408px;font-size:13px;color:#444">Oswald</div>
<div class="t" style="left:929px;top:433px;font-size:10.5px;color:#999">替换下方本机字体</div>
<div class="a" style="left:929px;top:452px;width:181px;height:23px;background:#f7f8fa"></div>
<div class="t" style="left:936px;top:459px;font-size:11px;color:#333;font-family:'Liberation Serif',serif">Nyala</div>
<div class="t" style="left:1082px;top:458px;font-size:11px;color:#e8663d">替换</div>
<div class="a" style="left:919px;top:640px;width:97px;height:25px;background:#f06a3c;border-radius:2px"></div>
<div class="t" style="left:944px;top:647px;font-size:11.5px;color:#fff">一键下载</div>
<div class="a" style="left:1023px;top:640px;width:97px;height:25px;background:#fff;border:1px solid #d0d0d0;border-radius:2px"></div>
<div class="t" style="left:1036px;top:647px;font-size:11.5px;color:#333">更多办公字体</div>
<!-- strip icons -->
<svg class="a" style="left:1131px;top:172px" width="37" height="504" fill="none" stroke="#555" stroke-width="1.1">
 <path d="M11 11h14M11 15h14" stroke="#ccc"/>
 <path d="M11 33h14M11 42h14" /><circle cx="14" cy="33" r="2" fill="#e9e9e9"/><circle cx="22" cy="42" r="2" fill="#e9e9e9"/>
 <path d="M16.5 73.5l.7-3.5-3.6-3.5 5-.7 2.2-4.5 2.2 4.5 5 .7-3.6 3.5.9 5-4.5-2.4-2 1"/><path d="M12 76l3-2M13 72l2-1" stroke-width="1"/>
 <path d="M12.5 106v-11h13v11h-4"/><path d="M15.5 98v8M15.5 106h5M18.5 104l2 2-2 2" stroke-width="1.1"/>
 <circle cx="18.5" cy="131" r="6.5"/><path d="M16.5 129a2 2 0 1 1 2.5 2v1.5M18.5 134.5v.5"/>
 <path d="M4 151.5h30" stroke="#dadada"/>
 <path d="M4 466.5h30" stroke="#dadada"/>
</svg>
<div class="a" style="left:1136px;top:331px;width:27px;height:27px;background:#c9c9c9;border-radius:3px"></div>
<div class="t" style="left:1142px;top:336px;font-size:17px;color:#555;font-family:'Liberation Serif',serif">T</div>
<svg class="a" style="left:1141px;top:657px" width="16" height="6" fill="none" stroke="#666" stroke-width="1.1"><circle cx="2.5" cy="3" r="1.8"/><circle cx="8" cy="3" r="1.8"/><circle cx="13.5" cy="3" r="1.8"/></svg>
<!-- status bar -->
<div class="a" style="left:0;top:676px;width:1168px;height:29px;background:#f3f3f3;border-top:1px solid #e6e6e6"></div>
<div class="t" style="left:9px;top:686px;font-size:11px;color:#666">幻灯片 1 / 14</div>
<div class="a" style="left:81px;top:680px;width:1px;height:22px;background:#e4e4e4"></div>
<div class="t" style="left:90px;top:686px;font-size:11px;color:#666">1_Office 主题</div>
<div class="a" style="left:163px;top:680px;width:1px;height:22px;background:#e4e4e4"></div>
<svg class="a" style="left:179px;top:686px" width="12" height="12" fill="none" stroke="#555" stroke-width="1.1"><path d="M1 1.5h8M5 1.5v9M3 10.5h4M8 7l2 2-2 2"/></svg>
<div class="t" style="left:196px;top:686px;font-size:11px;color:#666">缺失字体</div>
<div class="a" style="left:254px;top:680px;width:1px;height:22px;background:#e4e4e4"></div>
<svg class="a" style="left:594px;top:683px" width="570" height="20" fill="none" stroke="#666" stroke-width="1.1">
 <path d="M3 6l5-3 5 3v7l-5 3-5-3zM3 6l5 3 5-3M8 9v7"/>
 <path d="M68 10l3-3 3 3" fill="#555" stroke="none"/><path d="M68.5 10.5h5L71 7.5z" fill="#555" stroke="none"/>
 <path d="M84.5 3v15" stroke="#e2e2e2"/>
 <path d="M95 6h8M95 10h14M95 14h14M104 4l2 3 2-3" stroke="#555"/>
 <path d="M135 9.5h4l-2 2z" fill="#888" stroke="none"/>
 <rect x="147.5" y="5.5" width="12" height="11" rx="1" stroke="#555"/><path d="M150 10h7M150 13h5" stroke="#555"/><circle cx="148" cy="5" r="1.5" fill="#f08a5d" stroke="none"/>
 <path d="M195.5 3v15" stroke="#e2e2e2"/>
</svg>
<div class="t" style="left:613px;top:686px;font-size:11px;color:#555">智能美化</div>
<div class="t" style="left:704px;top:686px;font-size:11px;color:#555">备注</div>
<div class="t" style="left:758px;top:686px;font-size:11px;color:#555">批注</div>
<div class="a" style="left:799px;top:681px;width:19px;height:20px;background:#cbcbcb;border-radius:3px"></div>
<svg class="a" style="left:800px;top:683px" width="70" height="16" fill="none" stroke="#444" stroke-width="1.1">
 <rect x="3.5" y="2.5" width="12" height="11"/><path d="M7 3v10M7 10h8"/>
 <rect x="25.5" y="2.5" width="5" height="5"/><rect x="33.5" y="2.5" width="5" height="5"/><rect x="25.5" y="9.5" width="5" height="5"/><rect x="33.5" y="9.5" width="5" height="5"/>
 <path d="M46.5 3.5h6v10h-6zM52.5 3.5h6v10h-6z"/>
</svg>
<div class="a" style="left:872px;top:680px;width:1px;height:22px;background:#e4e4e4"></div>
<div class="a" style="left:882px;top:681px;width:26px;height:20px;background:#f26d4b;border-radius:3px"></div>
<div class="a" style="left:892px;top:686px;width:0;height:0;border-top:5px solid transparent;border-bottom:5px solid transparent;border-left:8px solid #fff"></div>
<div class="a" style="left:912px;top:690px;width:0;height:0;border-left:2.5px solid transparent;border-right:2.5px solid transparent;border-top:3px solid #888"></div>
<div class="a" style="left:927px;top:680px;width:1px;height:22px;background:#e4e4e4"></div>
<svg class="a" style="left:938px;top:684px" width="16" height="15" fill="none" stroke="#555" stroke-width="1.1"><path d="M1 4V1h3M12 1h3v3M15 11v3h-3M4 14H1v-3"/><rect x="4.5" y="4.5" width="7" height="6"/></svg>
<div class="t" style="left:958px;top:686px;font-size:11px;color:#666">63%</div>
<div class="a" style="left:984px;top:690px;width:0;height:0;border-left:2.5px solid transparent;border-right:2.5px solid transparent;border-top:3px solid #888"></div>
<div class="a" style="left:998px;top:690px;width:9px;height:2px;background:#333"></div>
<div class="a" style="left:1017px;top:690px;width:118px;height:1px;background:#aaa"></div>
<div class="a" style="left:1075px;top:687px;width:1px;height:7px;background:#aaa"></div>
<div class="a" style="left:1046px;top:685px;width:12px;height:12px;border-radius:50%;background:#f3f3f3;border:1.3px solid #666"></div>
<svg class="a" style="left:1144px;top:685px" width="11" height="11"><path d="M5.5 0v11M0 5.5h11" stroke="#333" stroke-width="1.6"/></svg>
<!-- share bar -->
<div class="a" style="left:0;top:705px;width:1168px;height:23px;background:#2b2e32"></div>
<div class="a" style="left:0;top:705px;width:172px;height:23px;background:#141516"></div>
<div class="a" style="left:0;top:705px;width:24px;height:23px;background:#f07a22"></div>
<svg class="a" style="left:2px;top:708px" width="20" height="18" fill="#fff"><circle cx="10" cy="5" r="3.5"/><path d="M2 17c0-5 3.5-7 8-7s8 2 8 7z"/></svg>
<svg class="a" style="left:26px;top:708px" width="16" height="17" fill="#fff"><rect x="1" y="1" width="14" height="10" rx="1"/><path d="M5 15h6" stroke="#fff" stroke-width="1.5"/><path d="M5 9c1-3 3-4 5-4V3l3 3-3 3V7c-2 0-3 1-5 2z" fill="#222"/></svg>
<svg class="a" style="left:45px;top:708px" width="13" height="17" fill="none" stroke="#fff" stroke-width="1.6"><rect x="3.5" y="1" width="6" height="10" rx="3" fill="#fff"/><path d="M1 8a5.5 5.5 0 0 0 11 0M6.5 13.5v3"/></svg>
<div class="t" style="left:64px;top:710px;font-size:13px;color:#fff">贾老师的屏幕共享</div>
<!-- sidebar -->
<div class="a" style="left:1168px;top:30px;width:198px;height:698px;background:linear-gradient(90deg,#56595d 0,#45484b 10%,#323437 35%,#242628 65%,#151617 88%,#000 100%)"></div>
<div class="a" style="left:1177px;top:53px;width:181px;height:101px;background:#1f2023;border:1px solid #5c5e62;border-radius:4px"></div>
<div class="a" style="left:1177px;top:163px;width:181px;height:101px;background:#1f2023;border:1px solid #5c5e62;border-radius:4px"></div>
<div class="a" style="left:1177px;top:273px;width:181px;height:101px;background:#1f2023;border:1px solid #5c5e62;border-radius:4px"></div>
<div class="a" style="left:1177px;top:383px;width:181px;height:101px;background:#1f2023;border:1px solid #5c5e62;border-radius:4px"></div>
<div class="a" style="left:1177px;top:493px;width:181px;height:101px;background:#1f2023;border:1px solid #5c5e62;border-radius:4px"></div>
<div class="a" style="left:1177px;top:603px;width:181px;height:101px;background:#1f2023;border:1px solid #5c5e62;border-radius:4px"></div>

<div class="a" style="left:1242px;top:70px;width:50px;height:50px;border-radius:50%;background:radial-gradient(circle at 34% 90%,#f4f4ff 0,#dcdcf8 9%,transparent 17%),radial-gradient(circle at 47% 82%,#fff 0,transparent 9%),radial-gradient(circle at 76% 88%,#f8e4ee 0,#d8b8d0 6%,transparent 12%),radial-gradient(circle at 12% 68%,#f0dcea 0,transparent 10%),radial-gradient(circle at 90% 66%,#e8c8d8 0,transparent 9%),radial-gradient(circle at 62% 76%,#5a48f0 0,#3a2ab8 12%,transparent 22%),radial-gradient(circle at 30% 72%,#6848c8 0,transparent 18%),linear-gradient(180deg,#281848,#2a1460 60%,#201040)"></div>
<div class="a" style="left:1178px;top:133px;width:153px;height:20px;background:#121314"></div>
<div class="a" style="left:1178px;top:133px;width:22px;height:20px;background:#f07a22"></div>
<svg class="a" style="left:1180px;top:135px" width="18" height="17" fill="#fff"><circle cx="9" cy="5" r="3.3"/><path d="M2 16c0-4.5 3-6.5 7-6.5s7 2 7 6.5z"/></svg>
<svg class="a" style="left:1202px;top:136px" width="14" height="15" fill="#fff"><rect x="0" y="0" width="13" height="9" rx="1"/><path d="M4 13h5" stroke="#fff" stroke-width="1.5"/><path d="M3.5 7.5c1-2.5 2.5-3.5 4.5-3.5V2l3 2.8-3 2.8V5.5c-1.5 0-3 .7-4.5 2z" fill="#222"/></svg>
<svg class="a" style="left:1221px;top:135px" width="13" height="17" fill="none" stroke="#fff" stroke-width="1.5"><rect x="3.5" y="1" width="6" height="9" rx="3" fill="#fff"/><path d="M1 7a5.5 5.5 0 0 0 11 0M6.5 12.5v3"/></svg>
<div class="t" style="left:1240px;top:137.5px;font-size:11px;color:#fff;letter-spacing:0.5px">贾老师的屏幕共享</div>
<div class="a" style="left:1179px;top:164px;width:176px;height:99px;overflow:hidden;background:#b8a88e">
 <div class="a" style="left:0px;top:0px;width:176px;height:5px;background:#d3d0cb;"></div>
 <div class="a" style="left:0px;top:5px;width:176px;height:4px;background:#8f8c88;"></div>
 <div class="a" style="left:0px;top:9px;width:176px;height:23px;background:#cdcac5;"></div>
 <div class="a" style="left:0px;top:32px;width:176px;height:15px;background:#bcab90;"></div>
 <div class="a" style="left:0px;top:47px;width:176px;height:3px;background:#d9cdb8;"></div>
 <div class="a" style="left:0px;top:50px;width:176px;height:21px;background:#b5a48a;"></div>
 <div class="a" style="left:0px;top:71px;width:176px;height:3px;background:#d9cdb8;"></div>
 <div class="a" style="left:0px;top:74px;width:176px;height:25px;background:#ab9c86;"></div>

 <div class="a" style="left:7px;top:40px;width:12px;height:14px;background:#e0d2b8"></div>
 <div class="a" style="left:19px;top:38px;width:18px;height:17px;background:repeating-linear-gradient(90deg,#ece8e0 0 2px,#c8c0b0 2px 3px)"></div>
 <div class="a" style="left:39px;top:42px;width:17px;height:12px;background:#e8e4dc"></div>
 <div class="a" style="left:75px;top:38px;width:14px;height:14px;background:repeating-linear-gradient(90deg,#ece8e0 0 2px,#c8c0b0 2px 3px)"></div>
 <div class="a" style="left:106px;top:40px;width:14px;height:9px;background:#e8e4dc"></div>
 <div class="a" style="left:129px;top:41px;width:30px;height:10px;background:#e5dfd2"></div>
 <div class="a" style="left:160px;top:38px;width:14px;height:12px;background:#e2ddd5"></div>
 <div class="a" style="left:3px;top:60px;width:17px;height:14px;background:repeating-linear-gradient(90deg,#ddd8d0 0 2px,#b0a898 2px 3px)"></div>
 <div class="a" style="left:31px;top:59px;width:17px;height:14px;background:repeating-linear-gradient(90deg,#ddd8d0 0 2px,#b0a898 2px 3px)"></div>
 <div class="a" style="left:53px;top:63px;width:9px;height:9px;background:#e0d2b8"></div>
 <div class="a" style="left:105px;top:58px;width:15px;height:14px;background:#8a8680"></div>
 <div class="a" style="left:165px;top:58px;width:8px;height:14px;background:#e6e4e2;border-radius:40% 40% 20% 20%"></div>
 <div class="a" style="left:64px;top:5px;width:5px;height:94px;background:#8d8a86"></div>
 <div class="a" style="left:117px;top:5px;width:6px;height:94px;background:#8d8a86"></div>
 <div class="a" style="left:123px;top:61px;width:26px;height:22px;background:#8b8e91"></div>
 <div class="a" style="left:100px;top:84px;width:70px;height:2px;background:#3a3a3a"></div>
 <div class="a" style="left:40px;top:75px;width:18px;height:10px;background:#3a3a3a"></div>
 <div class="a" style="left:58px;top:41px;width:40px;height:60px;background:#5a4a47;border-radius:45% 45% 6% 6%"></div>
 <div class="a" style="left:63px;top:52px;width:29px;height:40px;background:#ead3c8;border-radius:25% 25% 45% 45%"></div>
 <div class="a" style="left:62px;top:46px;width:31px;height:9px;background:#5a4a47;border-radius:50% 50% 30% 30%"></div>
 <div class="a" style="left:70px;top:68px;width:5px;height:2px;background:#8a6a60"></div>
 <div class="a" style="left:81px;top:68px;width:5px;height:2px;background:#8a6a60"></div>
 <div class="a" style="left:86px;top:86px;width:24px;height:14px;background:#d8d8dc;border-radius:6px 6px 0 0"></div>
</div>
<div class="a" style="left:1180px;top:243px;width:82px;height:20px;background:rgba(40,38,38,.6)"></div>

<div class="a" style="left:1241px;top:292px;width:51px;height:51px;border-radius:50%;background:#1b73f0"></div>
<div class="t" style="left:1248px;top:308px;font-size:18px;color:#fff">海鹏</div>
<div class="a" style="left:1180px;top:353px;width:72px;height:20px;background:#161719"></div>
<div class="a" style="left:1179px;top:384px;width:176px;height:99px;overflow:hidden;background:linear-gradient(90deg,#d2d2d4 0,#dadadc 60%,#d6d5d6 100%)">
 <div class="a" style="left:146px;top:1px;width:22px;height:15px;background:repeating-linear-gradient(45deg,#1e2840 0 1.5px,#8a90a0 1.5px 3px)"></div>
 <div class="a" style="left:0;top:48px;width:152px;height:52px;background:#c6c5c6;border-radius:6px 6px 0 0"></div>
 <div class="a" style="left:5px;top:52px;width:21px;height:24px;background:#2a302e;transform:rotate(-6deg)"></div>
 <div class="a" style="left:24px;top:50px;width:14px;height:24px;background:#b8b8ba"></div>
 <div class="a" style="left:38px;top:48px;width:30px;height:25px;background:repeating-linear-gradient(100deg,#a8a8aa 0 3px,#d0d0d2 3px 6px)"></div>
 <div class="a" style="left:68px;top:49px;width:16px;height:25px;background:#dcdcde"></div>
 <div class="a" style="left:118px;top:50px;width:32px;height:32px;background:repeating-linear-gradient(60deg,#b0b0b2 0 2px,#d8d8da 2px 5px)"></div>
 <div class="a" style="left:0;top:74px;width:150px;height:26px;background:#c2c1c2"></div>
 <div class="a" style="left:150px;top:74px;width:24px;height:26px;background:#e4e4e6"></div>
 <div class="a" style="left:152px;top:64px;width:20px;height:10px;background:linear-gradient(90deg,#a04030,#d08050,#a85040)"></div>
 <div class="a" style="left:55px;top:84px;width:92px;height:30px;background:#6e1a36;border-radius:45% 45% 0 0"></div>
 <div class="a" style="left:79px;top:40px;width:40px;height:44px;background:#3e2440;border-radius:48% 48% 25% 25%"></div>
 <div class="a" style="left:83px;top:48px;width:32px;height:40px;background:#d2b4a8;border-radius:30% 30% 45% 45%"></div>
 <div class="a" style="left:83px;top:64px;width:16px;height:12px;border:2px solid #3a2a34;border-radius:3px;background:rgba(190,190,160,.35)"></div>
 <div class="a" style="left:99px;top:64px;width:16px;height:12px;border:2px solid #3a2a34;border-radius:3px;background:rgba(190,190,160,.35)"></div>
</div>
<div class="a" style="left:1180px;top:463px;width:48px;height:20px;background:rgba(45,43,43,.7)"></div>
<div class="a" style="left:1178px;top:494px;width:179px;height:99px;background:#2a2d30;border-radius:3px"></div>
<div class="a" style="left:1239px;top:495px;width:55px;height:98px;overflow:hidden;background:linear-gradient(180deg,#c9c9ca 0,#c4c3c4 35%,#d2cfcf 65%,#dcdcdc 100%)">
 <div class="a" style="left:0;top:0;width:55px;height:16px;background:linear-gradient(180deg,#f0f0f0,#d8d8d8);clip-path:polygon(0 85%,100% 45%,100% 100%,0 100%)"></div>
 <div class="a" style="left:0;top:0;width:55px;height:15px;background:#3a2e28;clip-path:polygon(0 0,100% 0,100% 50%,0 88%)"></div>
 <div class="a" style="left:0;top:13px;width:12px;height:20px;background:linear-gradient(180deg,#f4f4f4,#c8c8c8);border-radius:0 0 60% 0"></div>
 <div class="a" style="left:45px;top:9px;width:10px;height:24px;background:linear-gradient(180deg,#f4f4f4,#c8c8c8);border-radius:0 0 0 60%"></div>
</div>
<div class="a" style="left:1180px;top:573px;width:59px;height:20px;background:#161719"></div>
<div class="a" style="left:1179px;top:604px;width:176px;height:99px;overflow:hidden;background:#b8a88e">
 <div class="a" style="left:0px;top:0px;width:176px;height:5px;background:#d3d0cb;"></div>
 <div class="a" style="left:0px;top:5px;width:176px;height:4px;background:#8f8c88;"></div>
 <div class="a" style="left:0px;top:9px;width:176px;height:23px;background:#cdcac5;"></div>
 <div class="a" style="left:0px;top:32px;width:176px;height:16px;background:#bcab90;"></div>
 <div class="a" style="left:0px;top:48px;width:176px;height:3px;background:#d9cdb8;"></div>
 <div class="a" style="left:0px;top:51px;width:176px;height:21px;background:#b5a48a;"></div>
 <div class="a" style="left:0px;top:72px;width:176px;height:3px;background:#d9cdb8;"></div>
 <div class="a" style="left:0px;top:75px;width:176px;height:24px;background:#ab9c86;"></div>

 <div class="a" style="left:1px;top:35px;width:18px;height:13px;background:#ddd6cc"></div>
 <div class="a" style="left:22px;top:38px;width:28px;height:10px;background:#e6ded0"></div>
 <div class="a" style="left:37px;top:2px;width:0;height:0"></div>
 <div class="a" style="left:63px;top:37px;width:14px;height:10px;background:#e6e2da"></div>
 <div class="a" style="left:65px;top:26px;width:6px;height:6px;border-radius:50%;background:#222"></div>
 <div class="a" style="left:92px;top:33px;width:13px;height:15px;background:repeating-linear-gradient(90deg,#ece8e0 0 2px,#c8c0b0 2px 3px)"></div>
 <div class="a" style="left:126px;top:36px;width:17px;height:12px;background:#e2ded6"></div>
 <div class="a" style="left:146px;top:33px;width:16px;height:15px;background:repeating-linear-gradient(90deg,#ece8e0 0 2px,#c8c0b0 2px 3px)"></div>
 <div class="a" style="left:163px;top:36px;width:11px;height:12px;background:#e0d2b8"></div>
 <div class="a" style="left:6px;top:58px;width:8px;height:13px;background:#e6e4e2;border-radius:40% 40% 20% 20%"></div>
 <div class="a" style="left:62px;top:56px;width:10px;height:14px;background:#a8a098"></div>
 <div class="a" style="left:134px;top:57px;width:16px;height:15px;background:repeating-linear-gradient(90deg,#ddd8d0 0 2px,#b0a898 2px 3px)"></div>
 <div class="a" style="left:162px;top:56px;width:12px;height:16px;background:repeating-linear-gradient(90deg,#ddd8d0 0 2px,#b0a898 2px 3px)"></div>
 <div class="a" style="left:28px;top:61px;width:24px;height:19px;background:#8d9093"></div>
 <div class="a" style="left:53px;top:5px;width:6px;height:94px;background:#8d8a86"></div>
 <div class="a" style="left:106px;top:5px;width:6px;height:94px;background:#8d8a86"></div>
 <div class="a" style="left:0;top:84px;width:176px;height:2px;background:#3d3b38"></div>
 <div class="a" style="left:88px;top:60px;width:12px;height:24px;background:#6a6a6a"></div>
 <div class="a" style="left:79px;top:84px;width:64px;height:20px;background:#b4c0c4;border-radius:40% 40% 0 0"></div>
 <div class="a" style="left:92px;top:43px;width:36px;height:42px;background:#2a2220;border-radius:45% 45% 15% 15%"></div>
 <div class="a" style="left:95px;top:50px;width:29px;height:37px;background:#dcaa9a;border-radius:35% 35% 45% 45%"></div>
</div>
<div class="a" style="left:1180px;top:683px;width:48px;height:20px;background:rgba(40,38,38,.55)"></div>
<svg class="a" style="left:1184px;top:246px" width="14" height="15"><rect x="4" y="1" width="6" height="9" rx="3" fill="#fff"/><path d="M1.5 7a5.5 5.5 0 0 0 11 0M7 12.5v2" fill="none" stroke="#fff" stroke-width="1.2"/><path d="M1.5 14L12.5 2" stroke="#e03a3a" stroke-width="1.6"/></svg>
<div class="t" style="left:1203px;top:248px;font-size:12px;color:#fff">李薇薇老师</div>
<svg class="a" style="left:1184px;top:356px" width="14" height="15"><rect x="4" y="1" width="6" height="9" rx="3" fill="#fff"/><path d="M1.5 7a5.5 5.5 0 0 0 11 0M7 12.5v2" fill="none" stroke="#fff" stroke-width="1.2"/><path d="M1.5 14L12.5 2" stroke="#e03a3a" stroke-width="1.6"/></svg>
<div class="t" style="left:1203px;top:358px;font-size:12px;color:#fff">29赵海鹏</div>
<svg class="a" style="left:1184px;top:466px" width="14" height="15"><rect x="4" y="1" width="6" height="9" rx="3" fill="#fff"/><path d="M1.5 7a5.5 5.5 0 0 0 11 0M7 12.5v2" fill="none" stroke="#fff" stroke-width="1.2"/><path d="M1.5 14L12.5 2" stroke="#e03a3a" stroke-width="1.6"/></svg>
<div class="t" style="left:1203px;top:468px;font-size:12px;color:#fff">龚毅</div>
<svg class="a" style="left:1184px;top:576px" width="14" height="15"><rect x="4" y="1" width="6" height="9" rx="3" fill="#fff"/><path d="M1.5 7a5.5 5.5 0 0 0 11 0M7 12.5v2" fill="none" stroke="#fff" stroke-width="1.2"/><path d="M1.5 14L12.5 2" stroke="#e03a3a" stroke-width="1.6"/></svg>
<div class="t" style="left:1203px;top:578px;font-size:12px;color:#fff">古陶胜</div>
<svg class="a" style="left:1184px;top:686px" width="14" height="15"><rect x="4" y="1" width="6" height="9" rx="3" fill="#fff"/><path d="M1.5 7a5.5 5.5 0 0 0 11 0M7 12.5v2" fill="none" stroke="#fff" stroke-width="1.2"/><path d="M1.5 14L12.5 2" stroke="#e03a3a" stroke-width="1.6"/></svg>
<div class="t" style="left:1203px;top:688px;font-size:12px;color:#fff">冯婧</div>

<div class="a" style="left:1096px;top:66px;width:244px;height:35px;background:rgba(38,40,43,.96);border-radius:5px"></div>
<div class="a" style="left:1178px;top:66px;width:162px;height:35px;background:rgba(48,50,54,.6);border-radius:0 5px 5px 0"></div>
<svg class="a" style="left:1106px;top:76px" width="16" height="17"><rect x="5" y="1" width="6" height="10" rx="3" fill="#888"/><path d="M2 8a6 6 0 0 0 12 0M8 14v2" fill="none" stroke="#888" stroke-width="1.1"/><path d="M2 15L14 3" stroke="#d03a3a" stroke-width="1.4"/></svg>
<div class="a" style="left:1132px;top:74px;width:1px;height:20px;background:#555"></div>
<div class="t" style="left:1141px;top:77px;font-size:13px;color:#fff">正在讲话:</div>
<svg class="a" style="left:1282px;top:68px" width="50" height="32"><path d="M8 18L17 7 26 21 32 13 41 21" fill="none" stroke="#45474a" stroke-width="8" stroke-linejoin="round" stroke-linecap="round"/></svg>
<!-- taskbar -->
<div class="a" style="left:0;top:728px;width:1366px;height:40px;background:linear-gradient(90deg,#223840 0,#213640 40%,#1e3346 75%,#1c2f48 100%)"></div>
<svg class="a" style="left:15px;top:739px" width="18" height="18" fill="#fff"><path d="M0 2.3l7.3-1v7.1H0zM8.3 1.2L18 0v8.4H8.3zM0 9.4h7.3v7.1L0 15.5zM8.3 9.4H18V18l-9.7-1.3z"/></svg>
<svg class="a" style="left:63px;top:739px" width="19" height="19" fill="none" stroke="#fff" stroke-width="1.5"><circle cx="11.5" cy="7.5" r="6"/><path d="M7.3 11.8L1.5 17.5"/></svg>
<svg class="a" style="left:110px;top:735px" width="26" height="26">
 <defs><linearGradient id="eg" x1="0" y1="0" x2="1" y2="1"><stop offset="0" stop-color="#38c6e8"/><stop offset=".5" stop-color="#1e8ee0"/><stop offset="1" stop-color="#1558b8"/></linearGradient></defs>
 <circle cx="13" cy="13" r="12" fill="url(#eg)"/>
 <path d="M6 16c0-5 4-7 8-7s7 2 7 5c0 2-2 3-5 3h-5c1 3 4 5 9 4-3 3-9 4-12 0" fill="#1a4fa0"/>
 <path d="M14 9c4 0 7 2 7 5 0 2-2 3-4 3h-6c0-4 1-8 3-8z" fill="#4fd88a" opacity=".85"/>
</svg>
<div class="a" style="left:160px;top:736px;width:24px;height:24px;border-radius:50%;background:#e8eef4"></div>
<svg class="a" style="left:160px;top:736px" width="24" height="24"><path d="M6 24c0-5 3-7 6-7s6 2 6 7z" fill="#fff"/><path d="M11 17h2v7h-2z" fill="#2ab0a0"/><circle cx="12" cy="11" r="4.5" fill="#f3d3bf"/><path d="M7.5 10c0-4 2-5.5 4.5-5.5s4.5 1.5 4.5 5.5c-1-2-3-2.5-4.5-2.5S8.5 8 7.5 10z" fill="#222"/></svg>
<div class="a" style="left:197px;top:728px;width:44px;height:40px;background:#3b4b56"></div>
<div class="a" style="left:242px;top:729px;width:1px;height:38px;background:#4a5a66"></div>
<div class="a" style="left:209px;top:737px;width:23px;height:22px;background:#1e6ff5;border-radius:4px"></div>
<svg class="a" style="left:209px;top:737px" width="23" height="22"><path d="M5 13.5L9 9 12.5 14.5 15 11.5 18.5 14.5" fill="none" stroke="#fff" stroke-width="3.2" stroke-linejoin="round" stroke-linecap="round"/></svg>
<svg class="a" style="left:258px;top:738px" width="24" height="19"><path d="M1 2h8l2 2h12v14H1z" fill="#e8b830"/><path d="M1 6h22v12H1z" fill="#f7cd4a"/><path d="M7 11h10v7H7z" fill="#3a8ad8"/><path d="M9 13h6v5H9z" fill="#f7cd4a"/></svg>
<div class="a" style="left:103px;top:766px;width:40px;height:2px;background:#8ab4e0"></div>
<div class="a" style="left:152px;top:766px;width:40px;height:2px;background:#8ab4e0"></div>
<div class="a" style="left:197px;top:766px;width:44px;height:2px;background:#8ab4e0"></div>
<div class="a" style="left:250px;top:766px;width:40px;height:2px;background:#8ab4e0"></div>
<!-- tray -->
<svg class="a" style="left:1055px;top:740px" width="300" height="20" fill="none" stroke="#fff" stroke-width="1.2">
 <path d="M1.5 11l5.5-5.5 5.5 5.5"/>
 <path d="M28.5 1.5h6v4h1.5v9h-9v-9h1.5z"/><path d="M33 15l2 2 3.5-4" stroke-width="1"/>
 <rect x="51.5" y="1" width="6" height="10" rx="3" fill="#fff"/><path d="M54.5 13v4M51 17h7"/>
</svg>
<svg class="a" style="left:1125px;top:738px" width="20" height="20"><ellipse cx="9" cy="9" rx="6" ry="8" fill="#222"/><ellipse cx="9" cy="12" rx="4" ry="5" fill="#fff"/><path d="M3 5c2-4 10-4 12 0" fill="#d63a8a"/><circle cx="14" cy="14" r="5" fill="#f0a040"/><path d="M11.5 13h5M11.5 15h5" stroke="#fff" stroke-width="1"/></svg>
<svg class="a" style="left:1149px;top:740px" width="200" height="18" fill="none" stroke="#fff" stroke-width="1.2">
 <path d="M1 7h3M4 5v4M4 7h2"/><rect x="7.5" y="4.5" width="9" height="7"/><path d="M9 6.5h6v3H9z" fill="#fff" stroke="none"/>
 <path d="M29 15a13 13 0 0 1 12-12M32 15a10 10 0 0 1 9-9M35 15a7 7 0 0 1 6-6" /><circle cx="40" cy="14" r="1.6" fill="#fff" stroke="none"/>
 <path d="M50 6h3l4-4v13l-4-4h-3z"/><path d="M59 5.5a4 4 0 0 1 0 5M61.5 3.5a7 7 0 0 1 0 9M64 1.5a10 10 0 0 1 0 13"/>
</svg>
<div class="t" style="left:1222px;top:740px;font-size:15px;color:#fff">中</div>
<div class="t" style="left:1261px;top:733px;font-size:11.5px;color:#fff">14:01</div>
<div class="t" style="left:1242px;top:751px;font-size:12.5px;color:#fff;letter-spacing:0.45px">2022/10/12</div>
<svg class="a" style="left:1325px;top:739px" width="18" height="18" fill="none" stroke="#fff" stroke-width="1.2"><path d="M1 1.5h16v11H10l-3 3v-3H1z"/></svg>
<div class="a" style="left:1362px;top:728px;width:1px;height:40px;background:#5a6a7a"></div>
</body></html>
